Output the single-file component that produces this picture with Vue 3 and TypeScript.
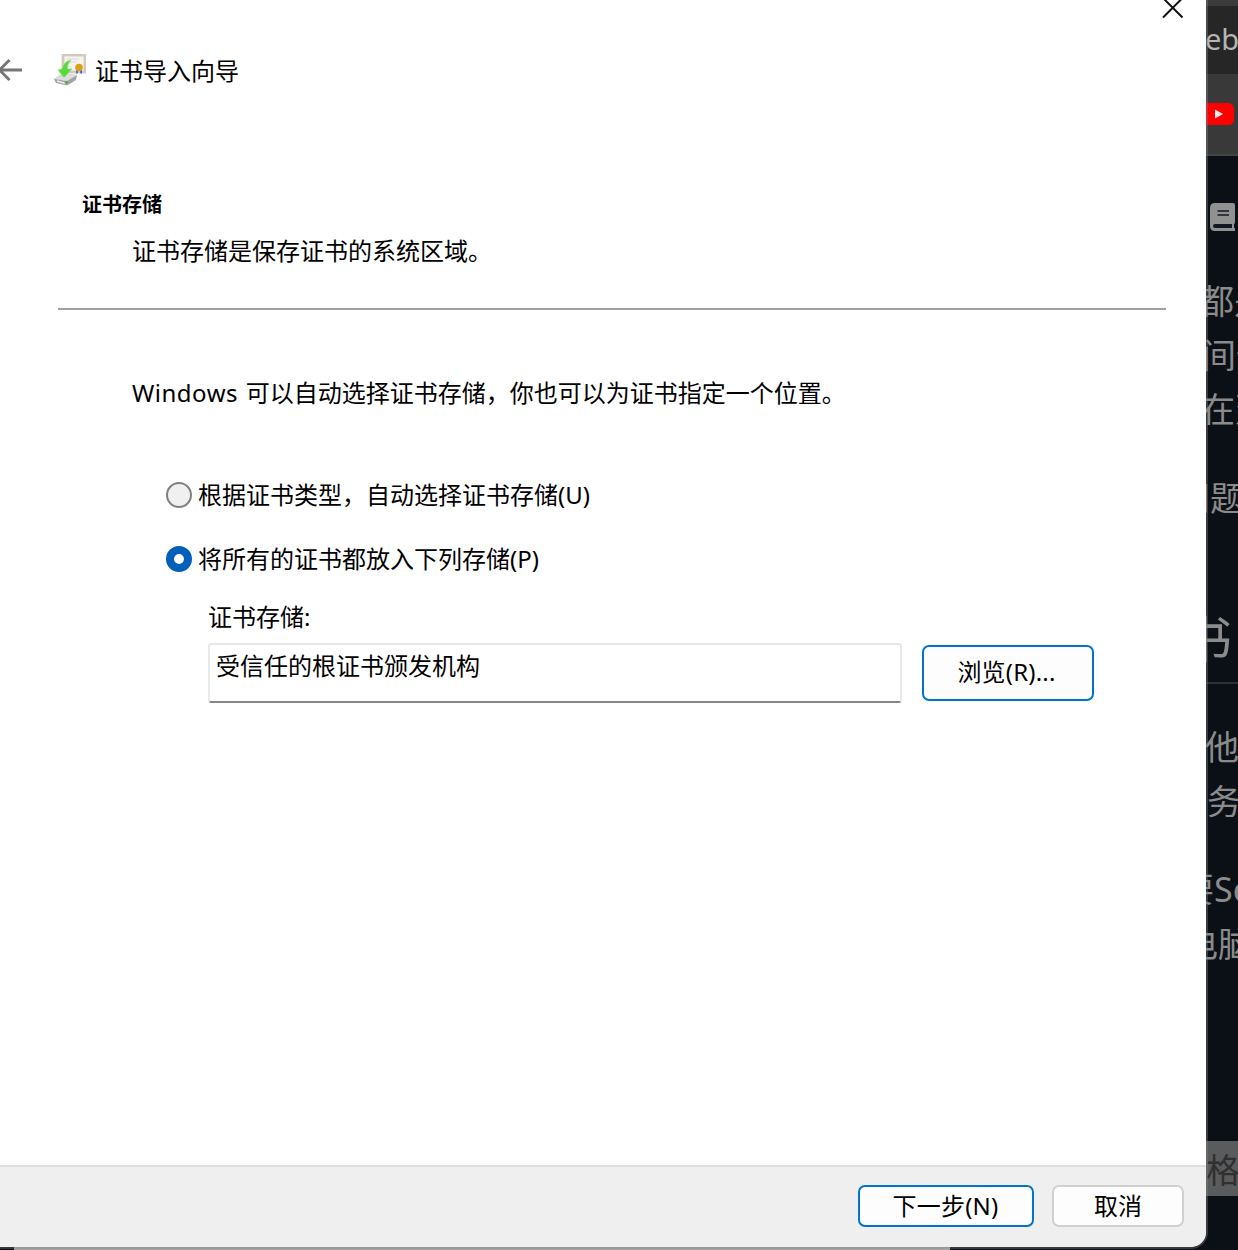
<script setup lang="ts">
import { ref } from 'vue'

interface StoreOption {
  id: string
  label: string
}

interface PageLine {
  text: string
  indent: number
  gap: number
  kind: 'body' | 'heading' | 'quote'
}

const options: StoreOption[] = [
  { id: 'auto', label: '根据证书类型，自动选择证书存储(U)' },
  { id: 'manual', label: '将所有的证书都放入下列存储(P)' },
]
const selected = ref('manual')

const pageLines: PageLine[] = [
  { text: '都是', indent: -6, gap: 43, kind: 'body' },
  { text: '间件', indent: -4, gap: -1, kind: 'body' },
  { text: '在建', indent: -5, gap: 0, kind: 'body' },
  { text: '问题', indent: -30, gap: 34, kind: 'body' },
  { text: '书', indent: -24, gap: 72, kind: 'heading' },
  { text: '他', indent: -1, gap: 36, kind: 'body' },
  { text: '服务', indent: -33, gap: -1, kind: 'body' },
  { text: '要Se', indent: -26, gap: 34, kind: 'body' },
  { text: '电脑', indent: -22, gap: 0, kind: 'body' },
  { text: '格', indent: 0, gap: 170, kind: 'quote' },
]
</script>

<template>
  <div class="screen">
    <aside class="browser">
      <div class="tab-strip"></div>
      <div class="address">eb</div>
      <div class="bookmarks">
        <svg width="29" height="22" viewBox="0 0 29 22">
          <path d="M0 0H22Q28 0 28 6V16Q28 22 22 22H0Z" fill="#f00" />
          <path d="M9 6.5V15.500L17 11Z" fill="#eee" />
        </svg>
      </div>
      <div class="page">
        <svg class="book" width="27" height="28" viewBox="0 0 27 28">
          <path d="M5 0H23Q25 0 25 2V19Q25 21 24 21V25H25V28H5Q0 28 0 23V5Q0 0 5 0Z" fill="#919191" />
          <path d="M7.500 8H19M7.500 12H19" stroke="#111820" stroke-width="1.700" />
          <path d="M5 21H22V25H5Q3 25 3 23Q3 21 5 21Z" fill="#111820" />
        </svg>
        <div
          v-for="line in pageLines"
          :key="line.text"
          class="line"
          :class="line.kind"
          :style="{ marginTop: line.gap + 'px', textIndent: line.indent + 'px' }"
        >{{ line.text }}</div>
      </div>
    </aside>

    <div class="taskbar"><span></span></div>

    <section class="dialog">
      <header class="titlebar">
        <svg class="back" width="22" height="24" viewBox="0 0 22 24">
          <path d="M22 12H0M9.500 2L-.5 12L9.500 22" fill="none" stroke="#757575" stroke-width="2.800" />
        </svg>
        <svg class="cert" width="32" height="32" viewBox="0 0 32 32">
          <rect x="9" y="1" width="22" height="17" fill="#f5f3ee" stroke="#d4c9bb" stroke-width="2.800" />
          <path d="M13 5H25M14 8H23" stroke="#d9dce2" stroke-width="1.200" />
          <path d="M22 15V20L24 19V15ZM26 15V19L28 20V15Z" fill="#3977e2" />
          <circle cx="25" cy="13.500" r="3.800" fill="#dda018" />
          <path d="M0 25L9 20L23 21L22 26L13 31.500L2 29Z" fill="#a2a5a4" />
          <path d="M0 25L10 20L23 21L13 27Z" fill="#dcdedd" />
          <path d="M3 27L12 29.500" stroke="#eceded" stroke-width="1.500" />
          <path d="M11 29L13.500 28" stroke="#47a83a" stroke-width="2" />
          <path d="M17 6Q10 7 8 15L4 16L10 23.500L18 15L13.500 15Q13 10 17 6Z" fill="#58d83d" stroke="#8ce476" stroke-width=".7" />
        </svg>
        <h1>证书导入向导</h1>
        <svg class="close" width="22" height="22" viewBox="0 0 22 22">
          <path d="M1 -1L20.500 18.500M20.500 -1L1 18.500" stroke="#111" stroke-width="2" />
        </svg>
      </header>

      <main>
        <h2>证书存储</h2>
        <p class="summary">证书存储是保存证书的系统区域。</p>
        <hr />
        <p class="hint"><span class="product">Windows</span> 可以自动选择证书存储，你也可以为证书指定一个位置。</p>
        <div class="options">
          <label v-for="option in options" :key="option.id" class="option">
            <input v-model="selected" type="radio" name="store" :value="option.id" />
            <span>{{ option.label }}</span>
          </label>
        </div>
        <div class="store">
          <div class="store-label">证书存储:</div>
          <div class="store-row">
            <div class="field">受信任的根证书颁发机构</div>
            <button class="accent browse">浏览(R)...</button>
          </div>
        </div>
      </main>

      <footer>
        <button class="accent next">下一步(N)</button>
        <button class="cancel">取消</button>
      </footer>
    </section>
  </div>
</template>

<style>
body {
  margin: 0;
  overflow: hidden;
}
</style>

<style scoped>
* {
  box-sizing: border-box;
}

.screen {
  position: relative;
  width: 1238px;
  height: 1250px;
  overflow: hidden;
  background: #0b0f16;
  font-family: "Noto Sans", "Noto Sans CJK SC", sans-serif;
  font-size: 24px;
  color: #000;
}

h1,
h2,
p {
  margin: 0;
  font-size: 24px;
  font-weight: 400;
}

.browser {
  display: flex;
  flex-direction: column;
  width: 32px;
  height: 1250px;
  margin-left: 1206px;
  overflow: hidden;
}

.tab-strip {
  height: 6px;
  background: #3b3b3b;
}

.address {
  height: 68px;
  background: #262626;
  color: #b5b5b5;
  font-size: 29px;
  line-height: 66px;
  text-indent: -1px;
}

.bookmarks {
  height: 82px;
  padding-top: 29px;
  background: #393939;
  border-bottom: 2px solid #414345;
}

.bookmarks svg,
.book {
  display: block;
}

.page {
  display: flex;
  flex-direction: column;
}

.book {
  margin: 47px 0 0 3.500px;
}

.line {
  height: 54.500px;
  color: #8b8b8b;
  font-size: 34px;
  line-height: 54px;
  white-space: nowrap;
}

.heading {
  height: 87px;
  border-bottom: 2px solid #2c2f34;
  font-size: 50px;
  line-height: 84px;
}

.quote {
  background: #5a5b5d;
  color: #303030;
  line-height: 58px;
}

.dialog {
  position: absolute;
  top: 0;
  left: 0;
  display: flex;
  flex-direction: column;
  width: 1208px;
  height: 1249px;
  border-right: 2px solid rgba(125, 127, 130, 0.4);
  border-bottom: 2px solid rgba(125, 127, 130, 0.4);
  border-bottom-right-radius: 17px;
  background: #fff;
  background-clip: padding-box;
  overflow: hidden;
}

.titlebar {
  display: flex;
  height: 190px;
}

.back {
  margin: 58px 32px 0 0;
}

.cert {
  margin: 54px 9px 0 0;
}

.titlebar h1 {
  margin-top: 54px;
  line-height: 34px;
}

.close {
  margin: -1px 22px 0 auto;
}

main {
  flex: 1;
}

main h2 {
  margin-left: 82px;
  font-size: 20px;
  font-weight: 700;
  line-height: 30px;
}

.summary {
  margin: 14px 0 0 132px;
  line-height: 34px;
}

hr {
  width: 1108px;
  height: 2px;
  margin: 40px 0 0 58px;
  border: 0;
  background: #a0a0a0;
}

.hint {
  margin: 66px 0 0 132px;
  line-height: 34px;
  white-space: nowrap;
}

.product {
  margin-right: 1.500px;
  letter-spacing: 0.5px;
}

.options {
  display: flex;
  flex-direction: column;
  gap: 30px;
  margin: 68px 0 0 166px;
}

.option {
  display: flex;
  align-items: center;
  gap: 6px;
  height: 34px;
  line-height: 34px;
}

.option input {
  appearance: none;
  width: 26px;
  height: 26px;
  margin: 0;
  border: 2px solid #808080;
  border-radius: 50%;
  background: #f0f0f0;
}

.option input:checked {
  border: 8px solid #005fb8;
  background: #fff;
}

.store {
  margin: 24px 0 0 208px;
}

.store-label {
  height: 43px;
  line-height: 34px;
}

.store-row {
  display: flex;
  align-items: flex-start;
  gap: 20px;
}

.field {
  width: 694px;
  height: 60px;
  padding: 4px 6px;
  border: 2px solid #e8e8e8;
  border-bottom-color: #868686;
  border-radius: 3px;
  line-height: 34px;
}

button {
  display: flex;
  align-items: center;
  justify-content: center;
  padding: 0;
  border: 2px solid #d0d0d0;
  border-radius: 7px;
  background: #fdfdfd;
  color: #000;
  font: inherit;
  line-height: 34px;
}

.accent {
  border-color: #0074cc;
}

.browse {
  width: 172px;
  height: 56px;
  margin-top: 2px;
  padding: 0 3px 2px 0;
  letter-spacing: 0.2px;
}

footer {
  display: flex;
  justify-content: flex-end;
  gap: 18px;
  height: 82px;
  padding: 18px 22px 0 0;
  border-top: 2px solid #dedede;
  background: #efefef;
}

.next {
  width: 176px;
  height: 42px;
  padding-right: 1px;
  letter-spacing: 0.2px;
}

.cancel {
  width: 132px;
  height: 42px;
}

.taskbar {
  position: absolute;
  bottom: 0;
  left: 0;
  width: 950px;
  height: 3px;
  padding-left: 14px;
  background: #08080c;
}

.taskbar span {
  display: block;
  height: 3px;
  background: #aaa8a8;
}
</style>
